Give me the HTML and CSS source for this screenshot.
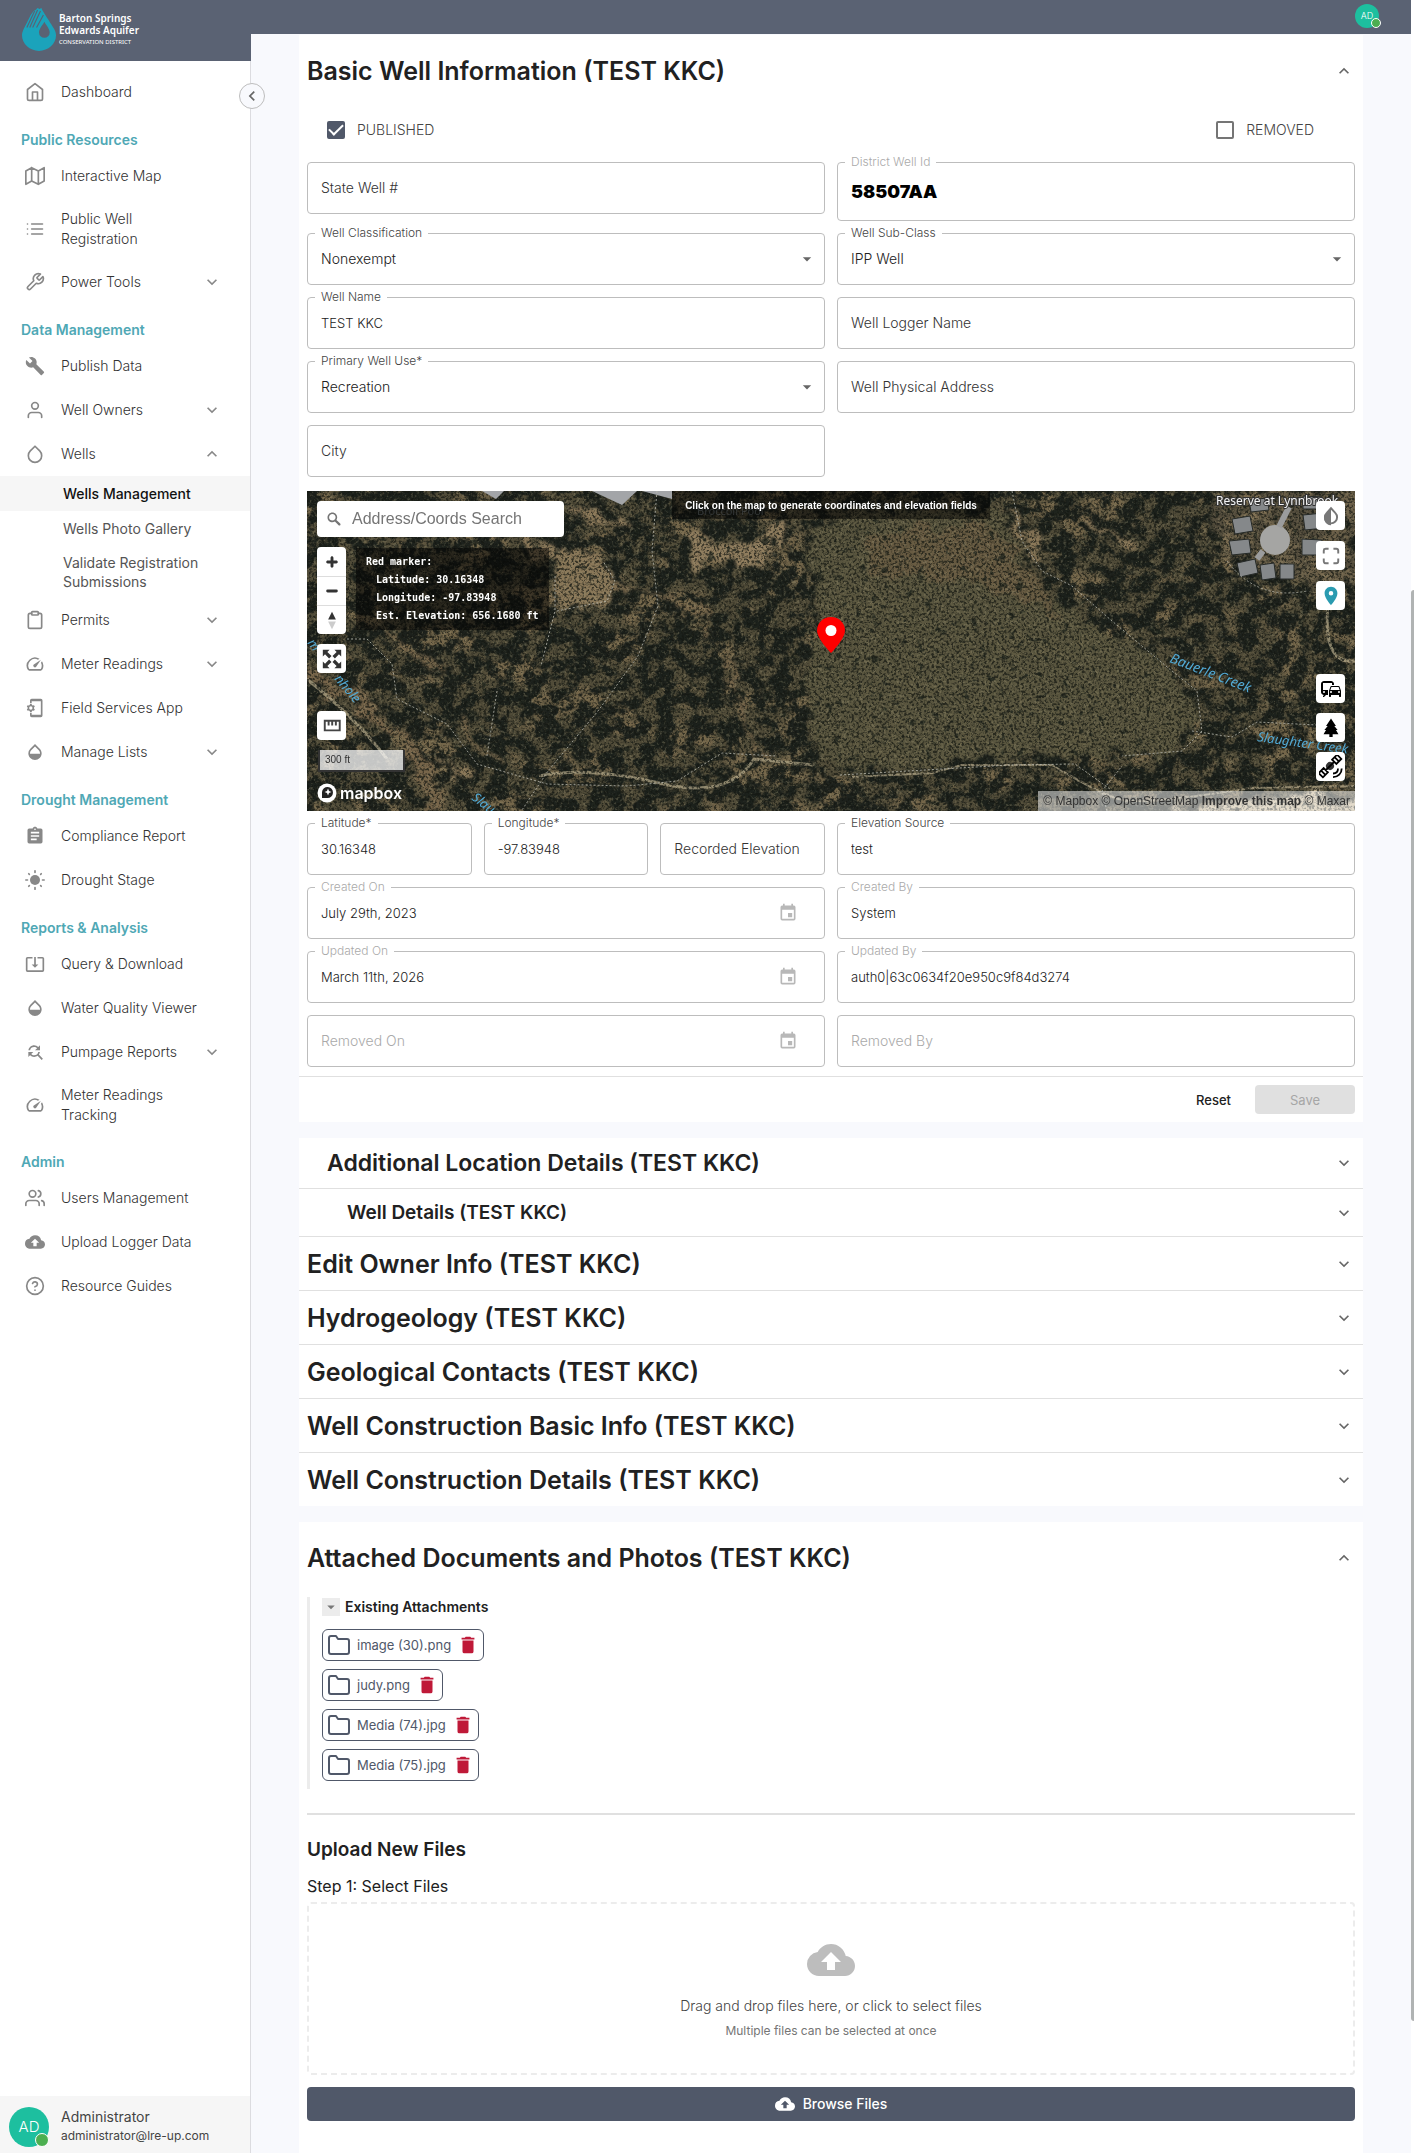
FILE: index.html
```html
<!DOCTYPE html>
<html lang="en">
<head>
<meta charset="utf-8">
<meta name="viewport" content="width=device-width, initial-scale=1">
<title>Wells Management</title>
<link rel="stylesheet" href="styles.css">
</head>
<body>
<svg class="sprite" aria-hidden="true">
  <symbol id="i-home" viewBox="0 0 24 24"><path class="ln" d="M3 9l9-7 9 7v11a2 2 0 0 1-2 2H5a2 2 0 0 1-2-2zM9 22V12h6v10"/></symbol>
  <symbol id="i-map" viewBox="0 0 24 24"><path class="ln" d="M1 6v16l7-4 8 4 7-4V2l-7 4-8-4zM8 2v16M16 6v16"/></symbol>
  <symbol id="i-list" viewBox="0 0 24 24"><path class="ln" d="M8 6h13M8 12h13M8 18h13M3 6h.01M3 12h.01M3 18h.01"/></symbol>
  <symbol id="i-tool" viewBox="0 0 24 24"><path class="ln" d="M14.7 6.3a1 1 0 0 0 0 1.4l1.6 1.6a1 1 0 0 0 1.4 0l3.77-3.77a6 6 0 0 1-7.94 7.94l-6.91 6.91a2.12 2.12 0 0 1-3-3l6.91-6.91a6 6 0 0 1 7.94-7.94l-3.76 3.76z"/></symbol>
  <symbol id="i-build" viewBox="0 0 24 24"><path d="M22.7 19l-9.1-9.1c.9-2.3.4-5-1.5-6.9-2-2-5-2.4-7.4-1.3L9 6 6 9 1.6 4.7C.4 7.1.9 10.1 2.9 12.1c1.9 1.9 4.6 2.4 6.9 1.5l9.1 9.1c.4.4 1 .4 1.4 0l2.3-2.3c.5-.4.5-1.1.1-1.4z"/></symbol>
  <symbol id="i-user" viewBox="0 0 24 24"><path class="ln" d="M20 21v-2a4 4 0 0 0-4-4H8a4 4 0 0 0-4 4v2"/><circle class="ln" cx="12" cy="7" r="4"/></symbol>
  <symbol id="i-users" viewBox="0 0 24 24"><path class="ln" d="M17 21v-2a4 4 0 0 0-4-4H5a4 4 0 0 0-4 4v2M23 21v-2a4 4 0 0 0-3-3.87M16 3.13a4 4 0 0 1 0 7.75"/><circle class="ln" cx="9" cy="7" r="4"/></symbol>
  <symbol id="i-drop" viewBox="0 0 24 24"><path class="ln" d="M12 2.69l5.66 5.66a8 8 0 1 1-11.31 0z"/></symbol>
  <symbol id="i-clip" viewBox="0 0 24 24"><path class="ln" d="M16 4h2a2 2 0 0 1 2 2v14a2 2 0 0 1-2 2H6a2 2 0 0 1-2-2V6a2 2 0 0 1 2-2h2"/><rect class="ln" x="8" y="2" width="8" height="4" rx="1"/></symbol>
  <symbol id="i-speed" viewBox="0 0 24 24"><path d="M20.38 8.57l-1.23 1.85a8 8 0 0 1-.22 7.58H5.07A8 8 0 0 1 15.58 6.85l1.85-1.23A10 10 0 0 0 3.35 19a2 2 0 0 0 1.72 1h13.85a2 2 0 0 0 1.74-1 10 10 0 0 0-.27-10.44zm-9.79 6.84a2 2 0 0 0 2.83 0l5.66-8.49-8.49 5.66a2 2 0 0 0 0 2.83z"/></symbol>
  <symbol id="i-app" viewBox="0 0 24 24"><path d="M8 1h11a2 2 0 0 1 2 2v18a2 2 0 0 1-2 2H8a2 2 0 0 1-2-2v-3h2v2h11V4H8v2H6V3a2 2 0 0 1 2-2z"/><path fill-rule="evenodd" d="M6 7h2l.3 1.4 1.1.6 1.4-.4 1 1.7-1 1.1v1.2l1 1.1-1 1.7-1.4-.4-1.1.6L8 17H6l-.3-1.4-1.1-.6-1.4.4-1-1.7 1-1.1v-1.2l-1-1.1 1-1.7 1.4.4 1.1-.6zM7 10a2 2 0 1 0 0 4 2 2 0 0 0 0-4z"/></symbol>
  <symbol id="i-opacity" viewBox="0 0 24 24"><path d="M17.66 8L12 2.35 6.34 8A8.02 8.02 0 0 0 4 13.64c0 2 .78 4.11 2.34 5.67a7.99 7.99 0 0 0 11.32 0c1.56-1.56 2.34-3.67 2.34-5.67S19.22 9.56 17.66 8zM6 14c.01-2 .62-3.27 1.76-4.4L12 5.27l4.24 4.38C17.38 10.77 17.99 12 18 14H6z"/></symbol>
  <symbol id="i-assign" viewBox="0 0 24 24"><path d="M19 3h-4.18C14.4 1.84 13.3 1 12 1s-2.4.84-2.82 2H5a2 2 0 0 0-2 2v14a2 2 0 0 0 2 2h14a2 2 0 0 0 2-2V5a2 2 0 0 0-2-2zm-7 0a1 1 0 1 1 0 2 1 1 0 0 1 0-2zm2 14H7v-2h7v2zm3-4H7v-2h10v2zm0-4H7V7h10v2z"/></symbol>
  <symbol id="i-sun" viewBox="0 0 24 24"><circle cx="12" cy="12" r="6"/><path class="ln" d="M12 1v2M12 21v2M1 12h2M21 12h2M4.500 4.500l.7.7M18.800 18.800l.7.7M4.500 19.500l.7-.7M18.800 5.200l.7-.7"/></symbol>
  <symbol id="i-download" viewBox="0 0 24 24"><path d="M12 16.500l4-4h-3v-9h-2v9H8l4 4zm9-13h-6v1.990h6v14.030H3V5.490h6V3.500H3a2 2 0 0 0-2 2v14a2 2 0 0 0 2 2h18a2 2 0 0 0 2-2v-14a2 2 0 0 0-2-2z"/></symbol>
  <symbol id="i-find" viewBox="0 0 24 24"><path d="M11 6c1.380 0 2.630.56 3.540 1.460L12 10h6V4l-2.050 2.050A6.980 6.980 0 0 0 11 4c-3.530 0-6.430 2.610-6.920 6H6.100A5 5 0 0 1 11 6zm5.640 9.140A6.890 6.890 0 0 0 17.920 12H15.900a5 5 0 0 1-4.900 4c-1.380 0-2.630-.56-3.540-1.460L10 12H4v6l2.050-2.050A6.980 6.980 0 0 0 11 18c1.550 0 2.980-.51 4.140-1.360L20 21.490 21.490 20l-4.850-4.860z"/></symbol>
  <symbol id="i-cloud" viewBox="0 0 24 24"><path d="M19.350 10.040A7.490 7.490 0 0 0 12 4C9.110 4 6.600 5.640 5.350 8.040A5.994 5.994 0 0 0 0 14c0 3.310 2.690 6 6 6h13c2.760 0 5-2.240 5-5 0-2.640-2.050-4.780-4.650-4.960zM14 13v4h-4v-4H7l5-5 5 5h-3z"/></symbol>
  <symbol id="i-help" viewBox="0 0 24 24"><circle class="ln" cx="12" cy="12" r="10"/><path class="ln" d="M9.090 9a3 3 0 0 1 5.830 1c0 2-3 3-3 3M12 17h.01"/></symbol>
  <symbol id="i-down" viewBox="0 0 24 24"><path d="M7.410 8.590L12 13.170l4.590-4.580L18 10l-6 6-6-6z"/></symbol>
  <symbol id="i-up" viewBox="0 0 24 24"><path d="M12 8l-6 6 1.410 1.410L12 10.830l4.590 4.580L18 14z"/></symbol>
  <symbol id="i-left" viewBox="0 0 24 24"><path d="M15.410 7.410L14 6l-6 6 6 6 1.410-1.410L10.830 12z"/></symbol>
  <symbol id="i-caret" viewBox="0 0 24 24"><path d="M7 10l5 5 5-5z"/></symbol>
  <symbol id="i-date" viewBox="0 0 24 24"><path d="M17 12h-5v5h5v-5zM16 1v2H8V1H6v2H5a2 2 0 0 0-2 2v14a2 2 0 0 0 2 2h14a2 2 0 0 0 2-2V5a2 2 0 0 0-2-2h-1V1h-2zm3 18H5V8h14v11z"/></symbol>
  <symbol id="i-folder" viewBox="0 0 24 24"><path class="ln" d="M22 19a2 2 0 0 1-2 2H4a2 2 0 0 1-2-2V5a2 2 0 0 1 2-2h5l2 3h9a2 2 0 0 1 2 2z"/></symbol>
  <symbol id="i-trash" viewBox="0 0 24 24"><path d="M6 19a2 2 0 0 0 2 2h8a2 2 0 0 0 2-2V7H6v12zM19 4h-3.500l-1-1h-5l-1 1H5v2h14V4z"/></symbol>
  <symbol id="i-pin" viewBox="0 0 24 24"><path d="M12 2C8.130 2 5 5.130 5 9c0 5.250 7 13 7 13s7-7.750 7-13c0-3.870-3.130-7-7-7zm0 9.500a2.500 2.500 0 1 1 0-5 2.500 2.500 0 0 1 0 5z"/></symbol>
</svg>

<div class="app">
  <aside class="sidebar">
    <a class="brand" href="#">
      <svg class="brand-mark" viewBox="0 0 36 44" aria-hidden="true">
        <path fill="#1ba3bb" fill-rule="evenodd" d="M20 0c1 3 4 7 9 15 4 6 6 9 6 13 0 9-8 16-17.500 16S0 37 0 28c0-4 3-9 6-15l3-6 3-4 2-1 2-2 2 1zM23 14c-2 4-5.500 7-5.500 11a5.500 5.500 0 0 0 11 0c0-4-3.500-7-5.500-11z"/>
        <path stroke="#5a6273" stroke-width="1.200" fill="none" d="M13 3L5 20M16 2L8 20M19 3l-8 17M22 7l-7 13"/>
      </svg>
      <span class="brand-text"><b>Barton Springs</b><b>Edwards Aquifer</b><small>CONSERVATION DISTRICT</small></span>
    </a>
    <button class="collapse" aria-label="Collapse menu"><svg><use href="#i-left"/></svg></button>
    <nav class="nav">
      <a class="item" href="#"><svg><use href="#i-home"/></svg><span>Dashboard</span></a>
      <h2>Public Resources</h2>
      <a class="item" href="#"><svg><use href="#i-map"/></svg><span>Interactive Map</span></a>
      <a class="item two" href="#"><svg><use href="#i-list"/></svg><span>Public Well<br>Registration</span></a>
      <a class="item" href="#"><svg><use href="#i-tool"/></svg><span>Power Tools</span><svg class="chev"><use href="#i-down"/></svg></a>
      <h2>Data Management</h2>
      <a class="item" href="#"><svg><use href="#i-build"/></svg><span>Publish Data</span></a>
      <a class="item" href="#"><svg><use href="#i-user"/></svg><span>Well Owners</span><svg class="chev"><use href="#i-down"/></svg></a>
      <a class="item" href="#"><svg><use href="#i-drop"/></svg><span>Wells</span><svg class="chev"><use href="#i-up"/></svg></a>
      <a class="sub active" href="#">Wells Management</a>
      <a class="sub" href="#">Wells Photo Gallery</a>
      <a class="sub two" href="#">Validate Registration<br>Submissions</a>
      <a class="item" href="#"><svg><use href="#i-clip"/></svg><span>Permits</span><svg class="chev"><use href="#i-down"/></svg></a>
      <a class="item" href="#"><svg><use href="#i-speed"/></svg><span>Meter Readings</span><svg class="chev"><use href="#i-down"/></svg></a>
      <a class="item" href="#"><svg><use href="#i-app"/></svg><span>Field Services App</span></a>
      <a class="item" href="#"><svg><use href="#i-opacity"/></svg><span>Manage Lists</span><svg class="chev"><use href="#i-down"/></svg></a>
      <h2>Drought Management</h2>
      <a class="item" href="#"><svg><use href="#i-assign"/></svg><span>Compliance Report</span></a>
      <a class="item" href="#"><svg><use href="#i-sun"/></svg><span>Drought Stage</span></a>
      <h2>Reports &amp; Analysis</h2>
      <a class="item" href="#"><svg><use href="#i-download"/></svg><span>Query &amp; Download</span></a>
      <a class="item" href="#"><svg><use href="#i-opacity"/></svg><span>Water Quality Viewer</span></a>
      <a class="item" href="#"><svg><use href="#i-find"/></svg><span>Pumpage Reports</span><svg class="chev"><use href="#i-down"/></svg></a>
      <a class="item two" href="#"><svg><use href="#i-speed"/></svg><span>Meter Readings<br>Tracking</span></a>
      <h2>Admin</h2>
      <a class="item" href="#"><svg><use href="#i-users"/></svg><span>Users Management</span></a>
      <a class="item" href="#"><svg><use href="#i-cloud"/></svg><span>Upload Logger Data</span></a>
      <a class="item" href="#"><svg><use href="#i-help"/></svg><span>Resource Guides</span></a>
    </nav>
    <footer class="account">
      <span class="avatar">AD</span>
      <span class="account-text"><span>Administrator</span><small>administrator@lre-up.com</small></span>
    </footer>
  </aside>

  <div class="main">
    <header class="topbar"><span class="avatar small">AD</span></header>
    <main class="content">
      <section class="panel first">
        <div class="panel-head"><h1>Basic Well Information (TEST KKC)</h1><button aria-label="Collapse section"><svg><use href="#i-up"/></svg></button></div>
        <form class="well-form">
          <div class="checks">
            <label><input type="checkbox" checked>PUBLISHED</label>
            <label><input type="checkbox">REMOVED</label>
          </div>
          <div class="grid">
            <div class="field empty"><input id="f1" type="text"><label for="f1">State Well #</label></div>
            <div class="field big off"><input id="f2" type="text" value="58507AA" readonly><label for="f2">District Well Id</label></div>
            <div class="field"><select id="f3"><option>Nonexempt</option></select><label for="f3">Well Classification</label><svg class="caret"><use href="#i-caret"/></svg></div>
            <div class="field"><select id="f4"><option>IPP Well</option></select><label for="f4">Well Sub-Class</label><svg class="caret"><use href="#i-caret"/></svg></div>
            <div class="field"><input id="f5" type="text" value="TEST KKC"><label for="f5">Well Name</label></div>
            <div class="field empty"><input id="f6" type="text"><label for="f6">Well Logger Name</label></div>
            <div class="field"><select id="f7"><option>Recreation</option></select><label for="f7">Primary Well Use*</label><svg class="caret"><use href="#i-caret"/></svg></div>
            <div class="field empty"><input id="f8" type="text"><label for="f8">Well Physical Address</label></div>
            <div class="field empty"><input id="f9" type="text"><label for="f9">City</label></div>
          </div>

          <div class="map">
            <svg class="aerial" viewBox="0 0 1048 320" preserveAspectRatio="xMidYMid slice" role="img" aria-label="Satellite map">
              <defs>
                <filter id="trees" x="0" y="0" width="100%" height="100%" color-interpolation-filters="sRGB">
                  <feTurbulence type="fractalNoise" baseFrequency="0.06 0.065" numOctaves="5" seed="11"/>
                  <feColorMatrix values="0 0 0 0 0.1  0 0 0 0 0.12  0 0 0 0 0.105  7 4 0 0 -4.9"/>
                </filter>
                <filter id="bare" x="0" y="0" width="100%" height="100%" color-interpolation-filters="sRGB">
                  <feTurbulence type="fractalNoise" baseFrequency="0.02 0.03" numOctaves="5" seed="4"/>
                  <feColorMatrix values="0 0 0 0 0.55  0 0 0 0 0.47  0 0 0 0 0.34  7 0 3 0 -5.3"/>
                </filter>
                <filter id="specks" x="0" y="0" width="100%" height="100%" color-interpolation-filters="sRGB">
                  <feTurbulence type="fractalNoise" baseFrequency="0.11" numOctaves="3" seed="21"/>
                  <feColorMatrix values="0 0 0 0 0.13  0 0 0 0 0.15  0 0 0 0 0.12  9 0 0 0 -5.8"/>
                </filter>
                <filter id="grain" x="0" y="0" width="100%" height="100%" color-interpolation-filters="sRGB">
                  <feTurbulence type="fractalNoise" baseFrequency="0.4" numOctaves="3" seed="8"/>
                  <feColorMatrix values="0 0 0 0 0.08  0 0 0 0 0.09  0 0 0 0 0.07  4 2 0 0 -2.8"/>
                </filter>
                <filter id="light" x="0" y="0" width="100%" height="100%" color-interpolation-filters="sRGB">
                  <feTurbulence type="fractalNoise" baseFrequency="0.3" numOctaves="3" seed="31"/>
                  <feColorMatrix values="0 0 0 0 0.6  0 0 0 0 0.57  0 0 0 0 0.44  4 2 0 0 -3.1"/>
                </filter>
                <filter id="rough" x="-10%" y="-10%" width="120%" height="120%" color-interpolation-filters="sRGB">
                  <feTurbulence type="fractalNoise" baseFrequency="0.05" numOctaves="4" seed="3"/>
                  <feDisplacementMap in="SourceGraphic" scale="34" xChannelSelector="R" yChannelSelector="G"/>
                  <feGaussianBlur stdDeviation="1.500"/>
                </filter>
              </defs>
              <rect width="1048" height="320" fill="#504b38"/>
              <rect width="1048" height="320" filter="url(#bare)" opacity=".6"/>
              <rect width="1048" height="320" filter="url(#trees)" opacity=".95"/>
              <g filter="url(#rough)">
                <path fill="#5c5841" opacity=".93" d="M500 40L560 20 690 20 735 100 800 145 862 170 885 232 862 262 700 266 560 280 510 262 500 215 510 130z"/>
                <path fill="#715f45" opacity=".6" d="M560 45l110-15 45 40 40 55-80-30-110-10z"/>
                <path fill="#8a7859" d="M244 64h50l14 26-10 25-50 5z"/>
                <path fill="#907d5e" d="M372 42l75 8 34-24-6 28-22 22-62-2z"/>
                <path fill="none" stroke="#77654a" stroke-width="13" d="M-5 178L50 210 95 250 125 290 120 325"/>
                <path fill="none" stroke="#8b7859" stroke-width="7" d="M205 48l45 15 50 6M265 18l60 12M125 262l45 25M700 20l40 50M780 30l50 25"/>
                <path fill="none" stroke="#77664b" stroke-width="5" d="M305 95l50 10 50 15-10 25M75 140l60 40M150 230l40 50M420 160l8 60 30 50"/>
                <path fill="#8a775b" d="M910 0h140v95h-50l-90-30z" opacity=".5"/>
                <path fill="#c9b898" d="M860 326l60-18 130-4v26z"/>
              </g>
              <rect width="1048" height="320" filter="url(#specks)" opacity=".8"/>
              <g fill="none" stroke="#b5a98a" stroke-width="3" opacity=".7">
                <path d="M1023 95q-12 80 25 75M232 285q50-10 120 7t95-24l60 6M0 188q50 40 80 80"/>
                <path d="M545 286l80-4 30-8h90q50 30 70 35t130-12l103-2" stroke-width="2"/>
              </g>
              <rect width="1048" height="320" filter="url(#light)" opacity=".35"/>
              <rect width="1048" height="320" filter="url(#grain)" opacity=".7"/>
              <g fill="#85888a" stroke="#262a28" stroke-width="1">
                <circle cx="968" cy="49" r="15" fill="#a5a5a3" stroke="none"/><path d="M972 36l10-20M956 60l-6 8" stroke="#9b9c9d" stroke-width="6"/>
                <path d="M925 28l18-3 3 15-18 3zM922 50l20-2 2 14-19 2zM930 72l18-4 3 14-18 4zM953 74l14-2 2 15-14 2zM973 73h14v15h-14zM996 24l20-2 2 15-20 2zM995 48l20 1v15h-20zM942 9l18-2 2 12-18 2zM996 5l19 1v12h-19z"/>
                <path d="M285 0h45l-15 14zM335 0h30v8zM175 0h22l-8 8z" fill="#a3a5a8" stroke="none"/>
              </g>
              <g fill="none" stroke="#b8b8ae" stroke-width="1" stroke-dasharray="2 2" opacity=".8">
                <path d="M40 148h20l25 25 5 35 50 25 30 40 70 20 80 2 50-5 45-28 55 3M248 85l0 35-14 55M250 120l50-10 8-20-12-20M350 0l-5 60 6 55-20 50-40 55-50 60-30 45M190 200l-10 65"/>
                <path d="M705 0l10 50 20 30 30 15 40 35 60 50 25 20 5 40-20 20-60 5M885 240l40 6 25-15 60 3M533 284l170-10 65-1 35 25M920 70q30 40 80 30M800 320l-5-20 20-25"/>
              </g>
              <g font-family="Noto Sans, sans-serif" font-size="14" font-style="italic" fill="#52a9d4">
                <text transform="translate(862 171) rotate(21)">Bauerle Creek</text>
                <text font-size="13" transform="translate(950 250) rotate(8)">Slaughter Creek</text>
                <text font-size="13" transform="translate(27 188) rotate(50)">nhole</text>
                <text font-size="13" transform="translate(0 152) rotate(52)">m W</text>
                <text font-size="13" transform="translate(164 308) rotate(38)">Slau</text>
              </g>
              <text x="390" y="24" font-family="Noto Sans, sans-serif" font-size="11" fill="#a9b3bb" opacity=".5">Broccoli Pool</text>
              <text x="909" y="14" font-family="Noto Sans, sans-serif" font-size="12" fill="#f4f4f4" stroke="#333" stroke-width="2" paint-order="stroke">Reserve at Lynnbrook</text>
            </svg>
            <p class="hint">Click on the map to generate coordinates and elevation fields</p>
            <div class="map-left">
              <label class="search"><svg viewBox="0 0 18 18"><path d="M7.400 2.500c-2.700 0-4.900 2.200-4.900 4.900s2.200 4.900 4.900 4.900c1 0 1.800-.2 2.500-.8l3.700 3.700c.2.2.4.3.8.3.7 0 1.100-.4 1.100-1.100 0-.3-.1-.5-.3-.8L11.400 10c.4-.8.8-1.600.8-2.500.1-2.800-2.100-5-4.800-5zm0 1.600c1.800 0 3.200 1.400 3.200 3.200s-1.400 3.200-3.200 3.200-3.300-1.300-3.300-3.100 1.400-3.300 3.300-3.300z"/></svg><input type="text" placeholder="Address/Coords Search" aria-label="Address or coordinates search"></label>
              <div class="map-row">
                <div class="ctl">
                  <button type="button" aria-label="Zoom in"><svg viewBox="0 0 29 29"><path d="M14.500 8.500c-.75 0-1.500.75-1.500 1.500v3h-3c-.75 0-1.500.75-1.500 1.500S9.250 16 10 16h3v3c0 .75.75 1.500 1.500 1.500S16 19.750 16 19v-3h3c.75 0 1.500-.75 1.500-1.500S19.750 13 19 13h-3v-3c0-.75-.75-1.500-1.500-1.500z"/></svg></button>
                  <button type="button" aria-label="Zoom out"><svg viewBox="0 0 29 29"><path d="M10 13a1.500 1.500 0 0 0 0 3h9a1.500 1.500 0 0 0 0-3z"/></svg></button>
                  <button type="button" aria-label="Reset north"><svg viewBox="0 0 29 29"><path d="M10.500 14l4-8 4 8z"/><path fill="#ccc" d="M10.500 16l4 8 4-8z"/></svg></button>
                </div>
                <pre class="readout">Red marker:
<span>Latitude: 30.16348
Longitude: -97.83948
Est. Elevation: 656.1680 ft</span></pre>
              </div>
              <div class="ctl"><button type="button" aria-label="Zoom to extent"><svg viewBox="0 0 29 29"><path d="M5 5h7l-2.300 2.300 4.300 4.200-2.500 2.500-4.200-4.300L5 12zM24 5v7l-2.300-2.300-4.200 4.300-2.500-2.500 4.300-4.200L17 5zM5 24v-7l2.300 2.300 4.200-4.300 2.500 2.500-4.300 4.200L12 24zM24 24h-7l2.300-2.300-4.300-4.200 2.500-2.500 4.200 4.300L24 17z"/></svg></button></div>
            </div>
            <div class="map-foot">
              <div class="ctl"><button type="button" aria-label="Measure"><svg viewBox="0 0 29 29"><path fill="none" stroke="#444" stroke-width="2" d="M7 9h15.500v10H7zM11 9v5M14.700 9v5M18.500 9v5"/></svg></button></div>
              <div class="scale">300 ft</div>
              <div class="mapbox"><svg viewBox="0 0 20 20"><circle cx="10" cy="10" r="9.500" fill="#fff"/><path fill="#222" d="M5 15V9a5.500 5.500 0 1 1 5.500 6z"/><path fill="#fff" d="M11 5.500l1 2.500 2.500 1-2.500 1-1 2.500-1-2.500L7.500 9l2.500-1z"/></svg>mapbox</div>
            </div>
            <div class="map-right">
              <div class="ctl"><button type="button" aria-label="Contrast"><svg viewBox="0 0 29 29"><path fill="none" stroke="#777" stroke-width="2" d="M14.500 6.500l4.400 4.800a6.300 6.300 0 1 1-8.800 0z"/><path fill="#777" d="M14.500 6v18a7 7 0 0 1-5-12z"/></svg></button></div>
              <div class="ctl"><button type="button" aria-label="Full screen"><svg viewBox="0 0 29 29"><path fill="none" stroke="#777" stroke-width="2" d="M7 12V9a2 2 0 0 1 2-2h3M17 7h3a2 2 0 0 1 2 2v3M22 17v3a2 2 0 0 1-2 2h-3M12 22H9a2 2 0 0 1-2-2v-3"/></svg></button></div>
              <div class="ctl teal"><button type="button" aria-label="Marker"><svg><use href="#i-pin"/></svg></button></div>
            </div>
            <div class="map-right low">
              <div class="ctl"><button type="button" aria-label="Streets"><svg viewBox="0 0 24 24"><path fill="#000" fill-rule="evenodd" d="M12 4H5C3.340 4 2 5.340 2 7v8c0 1.660 1.340 3 3 3l-1 1v1h1l2-2h2v-5H4V6h9v2h2V7c0-1.660-1.340-3-3-3zM5 14a1 1 0 1 1 0 2 1 1 0 0 1 0-2zm15.570-4.340A1 1 0 0 0 19.600 9h-7.190c-.46 0-.83.26-.98.66L10 13.770V19.500c0 .28.22.5.5.5h1c.28 0 .5-.22.5-.5V18h8v1.500c0 .28.22.5.5.5h1c.28 0 .5-.22.5-.5v-5.740zM12.410 10h7.190l1.030 3h-9.250zM12 16a1 1 0 1 1 0-2 1 1 0 0 1 0 2zm8 0a1 1 0 1 1 0-2 1 1 0 0 1 0 2z"/></svg></button></div>
              <div class="ctl"><button type="button" aria-label="Outdoors"><svg viewBox="0 0 29 29"><path fill="#000" d="M14.500 3l6 9h-2l4 5h-2l3 5h-7v3.500h-4V22h-7l3-5h-2l4-5h-2z"/></svg></button></div>
              <div class="ctl"><button type="button" aria-label="Satellite"><svg viewBox="0 0 24 24"><g transform="rotate(-45 11 11)"><circle cx="11" cy="11" r="4"/><path d="M-2 8h7v6h-7zM17 8h7v6h-7zM1.500 8v6M20.500 8v6M5 11h12" fill="none" stroke="#000" stroke-width="1.800"/></g><path fill="none" stroke="#000" stroke-width="1.800" d="M14 18.500c3 0 5-2 5-5M14 22.200c5 0 8.700-3.700 8.700-8.700"/></svg></button></div>
            </div>
            <svg class="marker" viewBox="0 0 28 36" aria-hidden="true"><path fill="#f00" d="M14 0C6 0 0 6 0 13.500 0 22 14 36 14 36s14-14 14-22.500C28 6 22 0 14 0z"/><circle cx="14" cy="13.500" r="5.500" fill="#fff"/></svg>
            <p class="credit"><a href="#">© Mapbox</a> <a href="#">© OpenStreetMap</a> <a href="#"><b>Improve this map</b></a> <a href="#">© Maxar</a></p>
          </div>

          <div class="grid">
            <div class="trio">
              <div class="field"><input id="g1" type="text" value="30.16348"><label for="g1">Latitude*</label></div>
              <div class="field"><input id="g2" type="text" value="-97.83948"><label for="g2">Longitude*</label></div>
              <div class="field empty"><input id="g3" type="text"><label for="g3">Recorded Elevation</label></div>
            </div>
            <div class="field"><input id="g4" type="text" value="test"><label for="g4">Elevation Source</label></div>
            <div class="field off"><input id="g5" type="text" value="July 29th, 2023" readonly><label for="g5">Created On</label><svg class="date"><use href="#i-date"/></svg></div>
            <div class="field off"><input id="g6" type="text" value="System" readonly><label for="g6">Created By</label></div>
            <div class="field off"><input id="g7" type="text" value="March 11th, 2026" readonly><label for="g7">Updated On</label><svg class="date"><use href="#i-date"/></svg></div>
            <div class="field off"><input id="g8" type="text" value="auth0|63c0634f20e950c9f84d3274" readonly><label for="g8">Updated By</label></div>
            <div class="field off empty"><input id="g9" type="text" readonly><label for="g9">Removed On</label><svg class="date"><use href="#i-date"/></svg></div>
            <div class="field off empty"><input id="g10" type="text" readonly><label for="g10">Removed By</label></div>
          </div>
          <div class="actions"><button type="reset" class="reset">Reset</button><button type="submit" class="save" disabled>Save</button></div>
        </form>
      </section>

      <section class="panel rows">
        <button class="mid"><span>Additional Location Details (TEST KKC)</span><svg><use href="#i-down"/></svg></button>
        <button class="low"><span>Well Details (TEST KKC)</span><svg><use href="#i-down"/></svg></button>
        <button><span>Edit Owner Info (TEST KKC)</span><svg><use href="#i-down"/></svg></button>
        <button><span>Hydrogeology (TEST KKC)</span><svg><use href="#i-down"/></svg></button>
        <button><span>Geological Contacts (TEST KKC)</span><svg><use href="#i-down"/></svg></button>
        <button><span>Well Construction Basic Info (TEST KKC)</span><svg><use href="#i-down"/></svg></button>
        <button><span>Well Construction Details (TEST KKC)</span><svg><use href="#i-down"/></svg></button>
      </section>

      <section class="panel docs">
        <div class="panel-head"><h1>Attached Documents and Photos (TEST KKC)</h1><button aria-label="Collapse section"><svg><use href="#i-up"/></svg></button></div>
        <div class="docs-body">
          <div class="attachments">
            <h3><button aria-label="Toggle attachments"><svg><use href="#i-caret"/></svg></button>Existing Attachments</h3>
            <div class="chip"><svg><use href="#i-folder"/></svg><a href="#">image (30).png</a><button aria-label="Delete image (30).png"><svg><use href="#i-trash"/></svg></button></div>
            <div class="chip"><svg><use href="#i-folder"/></svg><a href="#">judy.png</a><button aria-label="Delete judy.png"><svg><use href="#i-trash"/></svg></button></div>
            <div class="chip"><svg><use href="#i-folder"/></svg><a href="#">Media (74).jpg</a><button aria-label="Delete Media (74).jpg"><svg><use href="#i-trash"/></svg></button></div>
            <div class="chip"><svg><use href="#i-folder"/></svg><a href="#">Media (75).jpg</a><button aria-label="Delete Media (75).jpg"><svg><use href="#i-trash"/></svg></button></div>
          </div>
          <hr>
          <h2>Upload New Files</h2>
          <h4>Step 1: Select Files</h4>
          <div class="drop"><svg><use href="#i-cloud"/></svg><p>Drag and drop files here, or click to select files</p><small>Multiple files can be selected at once</small></div>
          <button class="browse"><svg><use href="#i-cloud"/></svg>Browse Files</button>
        </div>
      </section>
    </main>
  </div>
  <div class="track"><div class="thumb"></div></div>
</div>
</body>
</html>
```

FILE: styles.css
```css
* { box-sizing: border-box; }
body {
  margin: 0;
  background: #f8f9fd;
  color: #212121;
  font: 400 14px/20px Inter, sans-serif;
}
button, input, select { font: inherit; color: inherit; }
button { border: 0; padding: 0; background: none; cursor: pointer; }
a { color: inherit; text-decoration: none; }
h1, h2, h3, h4, p, pre { margin: 0; }
svg { fill: currentColor; display: block; flex: none; }
.sprite { position: absolute; width: 0; height: 0; }
.ln { fill: none; stroke: currentColor; stroke-width: 2; stroke-linecap: round; stroke-linejoin: round; }

.app { display: flex; min-height: 100vh; position: relative; }

/* Sidebar */
.sidebar {
  width: 251px;
  flex: none;
  display: flex;
  flex-direction: column;
  position: relative;
  background: #fff;
  border-right: 1px solid #dcdce0;
}
.brand {
  height: 61px;
  margin-right: -1px;
  padding: 0 22px 2px;
  display: flex;
  align-items: center;
  gap: 2px;
  background: #5a6273;
  color: #fff;
}
.brand-mark { width: 35px; height: 43px; }
.brand-text { display: flex; flex-direction: column; font-family: "Noto Sans", sans-serif; }
.brand-text b { font-size: 10px; line-height: 12px; font-weight: 600; }
.brand-text small { font-size: 6px; line-height: 12px; }
.collapse {
  position: absolute;
  top: 83px;
  right: -15px;
  width: 26px;
  height: 26px;
  display: grid;
  place-items: center;
  border: 1px solid #bdbdbd;
  border-radius: 50%;
  background: #f8f9fd;
  color: #666;
  z-index: 1;
}
.collapse svg { width: 20px; height: 20px; }
.nav { padding-top: 9px; }
.nav h2 {
  height: 40px;
  padding: 16px 21px 0;
  font-size: 14px;
  line-height: 20px;
  font-weight: 600;
  color: #4fa8b5;
}
.item {
  height: 44px;
  padding: 0 28px 0 25px;
  display: flex;
  align-items: center;
  gap: 16px;
  font-size: 14px;
  font-weight: 300;
  color: #333;
}
.item.two { height: 62px; }
.item svg { width: 20px; height: 20px; color: #888; }
.item .chev { margin-left: auto; }
.sub {
  height: 35px;
  padding-left: 63px;
  display: flex;
  align-items: center;
  font-size: 14px;
  line-height: 19px;
  color: #555;
}
.sub.two { height: 52px; }
.sub.active { background: #f6f6f6; color: #111; font-weight: 500; }
.account {
  margin-top: auto;
  height: 57px;
  padding: 4px 9px 0;
  display: flex;
  align-items: center;
  gap: 12px;
  background: #f6f6f6;
}
.account-text { display: flex; flex-direction: column; padding-bottom: 2px; color: #444; }
.account-text small { font-size: 12px; line-height: 18px; }
.avatar {
  width: 40px;
  height: 40px;
  display: grid;
  place-items: center;
  position: relative;
  border-radius: 50%;
  background: #1dbf9f;
  color: #fff;
  font-size: 15px;
  font-weight: 300;
}
.avatar::after {
  content: "";
  position: absolute;
  right: 0;
  bottom: 0;
  width: 12px;
  height: 12px;
  border: 1px solid #fff;
  border-radius: 50%;
  background: #4caf50;
}
.avatar.small { width: 24px; height: 24px; font-size: 9px; }
.avatar.small::after { width: 8px; height: 8px; right: -2px; }

/* Page */
.main { flex: 1; min-width: 0; }
.topbar {
  height: 34px;
  padding: 0 35px 2px 0;
  display: flex;
  align-items: center;
  justify-content: flex-end;
  background: #5a6273;
}
.content { padding: 1px 51px 0 48px; display: grid; gap: 16px; }
.track { position: absolute; top: 0; right: 0; bottom: 0; width: 3px; background: #fff; }
.thumb { margin-top: 590px; height: 1431px; border-radius: 3px 0 0 3px; background: #b0b3b3; }
.panel { background: #fff; }
.panel-head { height: 70px; padding: 2px 8px 0; display: flex; align-items: center; justify-content: space-between; }
.panel-head h1, .rows button { font-size: 25px; line-height: 30px; font-weight: 600; }
.panel-head svg, .rows svg { width: 20px; height: 20px; margin-right: 1px; color: #666; }

/* Form */
.checks { height: 57px; padding: 16px 49px 0 28px; display: flex; justify-content: space-between; align-items: flex-start; }
.checks label { display: flex; align-items: center; gap: 12px; height: 18px; font-weight: 300; color: #444; }
.checks input {
  appearance: none;
  width: 18px;
  height: 18px;
  margin: 0;
  display: grid;
  place-items: center;
  border: 2px solid #757575;
  border-radius: 2px;
}
.checks input:checked { background: #505869; border-color: #505869; }
.checks input:checked::after {
  content: "";
  width: 12px;
  height: 6px;
  border: solid #fff;
  border-width: 0 0 2px 2px;
  transform: translateY(-2px) rotate(-45deg);
}
.grid { padding: 0 8px; display: grid; grid-template-columns: 1fr 1fr; gap: 12px; align-items: start; }
.trio { display: grid; grid-template-columns: repeat(3, 1fr); gap: 12px; }
.field { position: relative; height: 52px; }
.field.big { height: 59px; }
.field input, .field select {
  appearance: none;
  width: 100%;
  height: 100%;
  padding: 0 13px;
  border: 1px solid #bdbdbd;
  border-radius: 4px;
  background: #fff;
  font-size: 13px;
  font-weight: 300;
  outline: 0;
}
.field select { font-size: 14px; }
.field.big input { font-size: 18px; font-weight: 900; color: #000; }
.field label {
  position: absolute;
  top: -8px;
  left: 8px;
  padding: 0 6px;
  background: #fff;
  font-size: 12px;
  line-height: 16px;
  font-weight: 300;
  color: #444;
}
.field.empty label { top: 18px; font-size: 14px; color: #333; }
.field.off label { color: #aaa; }
.caret, .date { position: absolute; width: 20px; height: 20px; top: 16px; right: 8px; color: #666; pointer-events: none; }
.date { right: 27px; color: #b8b8b8; }
.actions {
  margin-top: 9px;
  padding: 8px;
  border-top: 1px solid #e0e0e0;
  display: flex;
  justify-content: flex-end;
  gap: 24px;
  font-size: 13px;
}
.actions button { height: 29px; border-radius: 4px; }
.reset { font-weight: 500; }
.actions .save { width: 100px; background: #e0e0e0; color: #a6a6a6; cursor: default; }

/* Map */
.map { position: relative; height: 320px; margin: 14px 8px 12px; overflow: hidden; font-family: "Liberation Sans", sans-serif; }
.aerial { width: 100%; height: 100%; }
.hint {
  position: absolute;
  top: 0;
  left: 50%;
  transform: translateX(-50%);
  width: 318px;
  height: 28px;
  background: rgba(0, 0, 0, .5);
  color: #fff;
  font-size: 10px;
  line-height: 29px;
  font-weight: 700;
  text-align: center;
  white-space: nowrap;
}
.map-left { position: absolute; top: 10px; left: 10px; display: grid; gap: 10px; justify-items: start; }
.search { width: 247px; height: 36px; padding: 0 8px; display: flex; align-items: center; gap: 9px; background: #fff; border-radius: 4px; color: #757575; }
.search svg { width: 18px; height: 18px; }
.search input { flex: 1; min-width: 0; padding: 0; border: 0; outline: 0; font-size: 16px; background: none; }
.search input::placeholder { color: #757575; opacity: 1; }
.map-row { display: flex; align-items: flex-start; gap: 10px; }
.ctl { width: 29px; border-radius: 4px; background: #fff; color: #333; }
.ctl button { width: 29px; height: 29px; display: grid; place-items: center; }
.ctl button + button { border-top: 1px solid #ddd; }
.ctl svg { width: 28px; height: 28px; }
.readout {
  margin-top: 1px;
  width: 193px;
  height: 82px;
  padding: 5px 10px;
  background: rgba(0, 0, 0, .5);
  color: #fff;
  font: 700 10px/18px "DejaVu Sans Mono", monospace;
}
.readout span { display: block; padding-left: 10px; }
.map-foot { position: absolute; left: 10px; bottom: 7px; display: grid; gap: 10px; }
.scale { width: 87px; height: 22px; margin-left: 1px; padding-left: 5px; border: 2px solid #333; border-top: 0; background: rgba(255, 255, 255, .75); color: #333; font-size: 10px; line-height: 20px; }
.mapbox { display: flex; align-items: center; gap: 3px; height: 22px; color: #fff; font: 600 16px/22px Inter, sans-serif; }
.mapbox svg { width: 20px; height: 20px; }
.map-right { position: absolute; top: 10px; right: 10px; display: grid; gap: 11px; }
.map-right.low { top: 183px; gap: 10px; }
.map-right.low svg { width: 24px; height: 24px; }
.map-right .teal { color: #2a9bb0; }
.map-right .teal svg { width: 22px; height: 22px; }
.marker { position: absolute; left: 50%; top: 126px; width: 28px; height: 36px; margin-left: -14px; }
.credit { position: absolute; right: 0; bottom: 0; height: 20px; padding: 0 5px; background: rgba(255, 255, 255, .5); color: #333; font-size: 12px; line-height: 20px; }

/* Collapsed sections */
.rows { display: grid; }
.rows button {
  height: 54px;
  padding: 0 8px;
  display: flex;
  align-items: center;
  justify-content: space-between;
  text-align: left;
}
.rows button + button { border-top: 1px solid #e0e0e0; }
.rows .mid { height: 50px; padding-left: 28px; font-size: 23px; }
.rows .low { height: 48px; padding-left: 48px; font-size: 19px; }

/* Documents */
.docs-body { padding: 5px 8px 32px; }
.attachments { height: 192px; padding-left: 12px; border-left: 3px solid #ececec; display: flex; flex-direction: column; align-items: flex-start; gap: 8px; }
.attachments h3 { display: flex; align-items: center; gap: 5px; height: 24px; font-size: 14px; line-height: 20px; font-weight: 600; padding-bottom: 4px; }
.attachments h3 button { width: 18px; height: 18px; background: #ececec; color: #777; }
.attachments h3 svg { width: 18px; height: 18px; }
.chip { height: 32px; padding: 0 4px; display: flex; align-items: center; gap: 6px; border: 1px solid #505869; border-radius: 6px; color: #505869; font-size: 13px; }
.chip > svg { width: 24px; height: 24px; }
.chip button { color: #bf1938; }
.chip button svg { width: 22px; height: 22px; }
.docs hr { margin: 24px 0 24px; border: 0; border-top: 2px solid #e0e0e0; }
.docs h2 { font-size: 19px; line-height: 22px; font-weight: 600; }
.docs h4 { margin: 14px 0 5px; font-size: 16px; line-height: 22px; font-weight: 400; }
.drop {
  height: 173px;
  padding-top: 32px;
  display: flex;
  flex-direction: column;
  align-items: center;
  border: 2px dashed #ececec;
  border-radius: 4px;
}
.drop svg { width: 48px; height: 48px; color: #bdbdbd; }
.drop p { margin-top: 12px; font-weight: 300; color: #444; }
.drop small { margin-top: 5px; font-size: 12px; color: #757575; }
.browse {
  width: 100%;
  height: 34px;
  margin-top: 12px;
  display: flex;
  align-items: center;
  justify-content: center;
  gap: 8px;
  border-radius: 4px;
  background: #505869;
  color: #fff;
  font-weight: 500;
}
.browse svg { width: 20px; height: 20px; }
```
